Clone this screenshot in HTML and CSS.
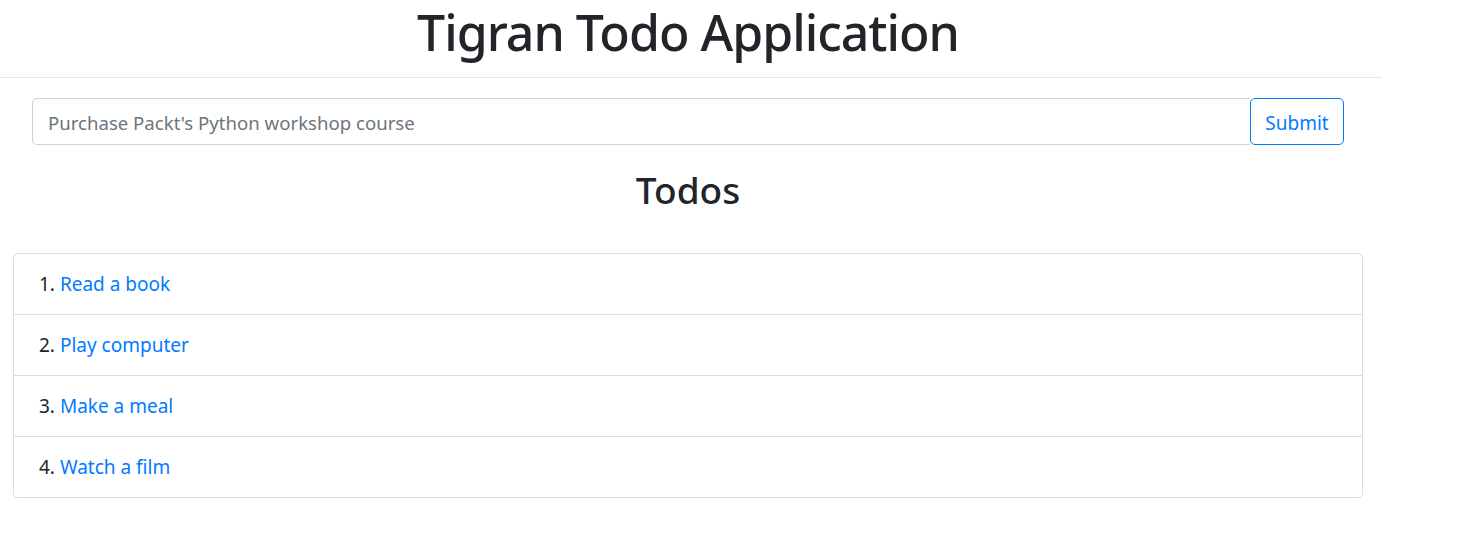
FILE: index.html
```
<!DOCTYPE html>
<html lang="en">
<head>
    <meta charset="UTF-8">
    <meta name="viewport" content="width=device-width, initial-scale=1.0">
    <title>Tigran Todo Application</title>
    <link rel="stylesheet" href="styles.css">
</head>
<body>
    <div class="page">
        <header class="app-header">
            <h1>Tigran Todo Application</h1>
        </header>

        <form class="todo-form">
            <input type="text" class="todo-input" placeholder="Purchase Packt's Python workshop course">
            <button type="submit" class="todo-submit">Submit</button>
        </form>

        <h2 class="todos-title">Todos</h2>

        <ul class="todo-list">
            <li class="todo-item">1. <a href="#">Read a book</a></li>
            <li class="todo-item">2. <a href="#">Play computer</a></li>
            <li class="todo-item">3. <a href="#">Make a meal</a></li>
            <li class="todo-item">4. <a href="#">Watch a film</a></li>
        </ul>
    </div>
</body>
</html>
```

FILE: styles.css
```
/* Reset */
* {
    margin: 0;
    padding: 0;
    box-sizing: border-box;
}

body {
    font-family: 'Noto Sans', 'Open Sans', sans-serif;
    color: #212529;
    background: #fff;
}

.page {
    width: 1382px;
}

/* Cabeçalho */
.app-header {
    border-bottom: 1px solid #e5e5e5;
    height: 78px;
    text-align: center;
}

.app-header h1 {
    font-size: 50px;
    font-weight: 500;
    letter-spacing: -1px;
    line-height: 64px;
    margin-left: -6px;
}

/* Formulário */
.todo-form {
    display: flex;
    margin: 20px 38px 0 32px;
    height: 47px;
}

.todo-input {
    flex: 1;
    font-family: inherit;
    font-size: 18.6px;
    padding: 2px 15px 0;
    border: 1px solid #ced4da;
    border-right: none;
    border-radius: 5px 0 0 5px;
    color: #495057;
}

.todo-input::placeholder {
    color: #6c757d;
}

.todo-submit {
    font-family: inherit;
    font-size: 19px;
    padding-top: 2px;
    color: #007bff;
    background: #fff;
    border: 1px solid #007bff;
    border-radius: 5px;
    width: 94px;
}

/* Lista */
.todos-title {
    text-align: center;
    font-size: 37px;
    font-weight: 500;
    line-height: 50px;
    margin: 20px 0 38px -6px;
}

.todo-list {
    list-style: none;
    margin: 0 19px 0 13px;
    border: 1px solid #dcdcdc;
    border-radius: 5px;
}

.todo-item {
    font-size: 19px;
    height: 61px;
    line-height: 60px;
    padding-left: 25px;
    border-top: 1px solid #dcdcdc;
}

.todo-item:first-child {
    border-top: none;
    height: 60px;
}

.todo-item a {
    color: #007bff;
    text-decoration: none;
}
```
